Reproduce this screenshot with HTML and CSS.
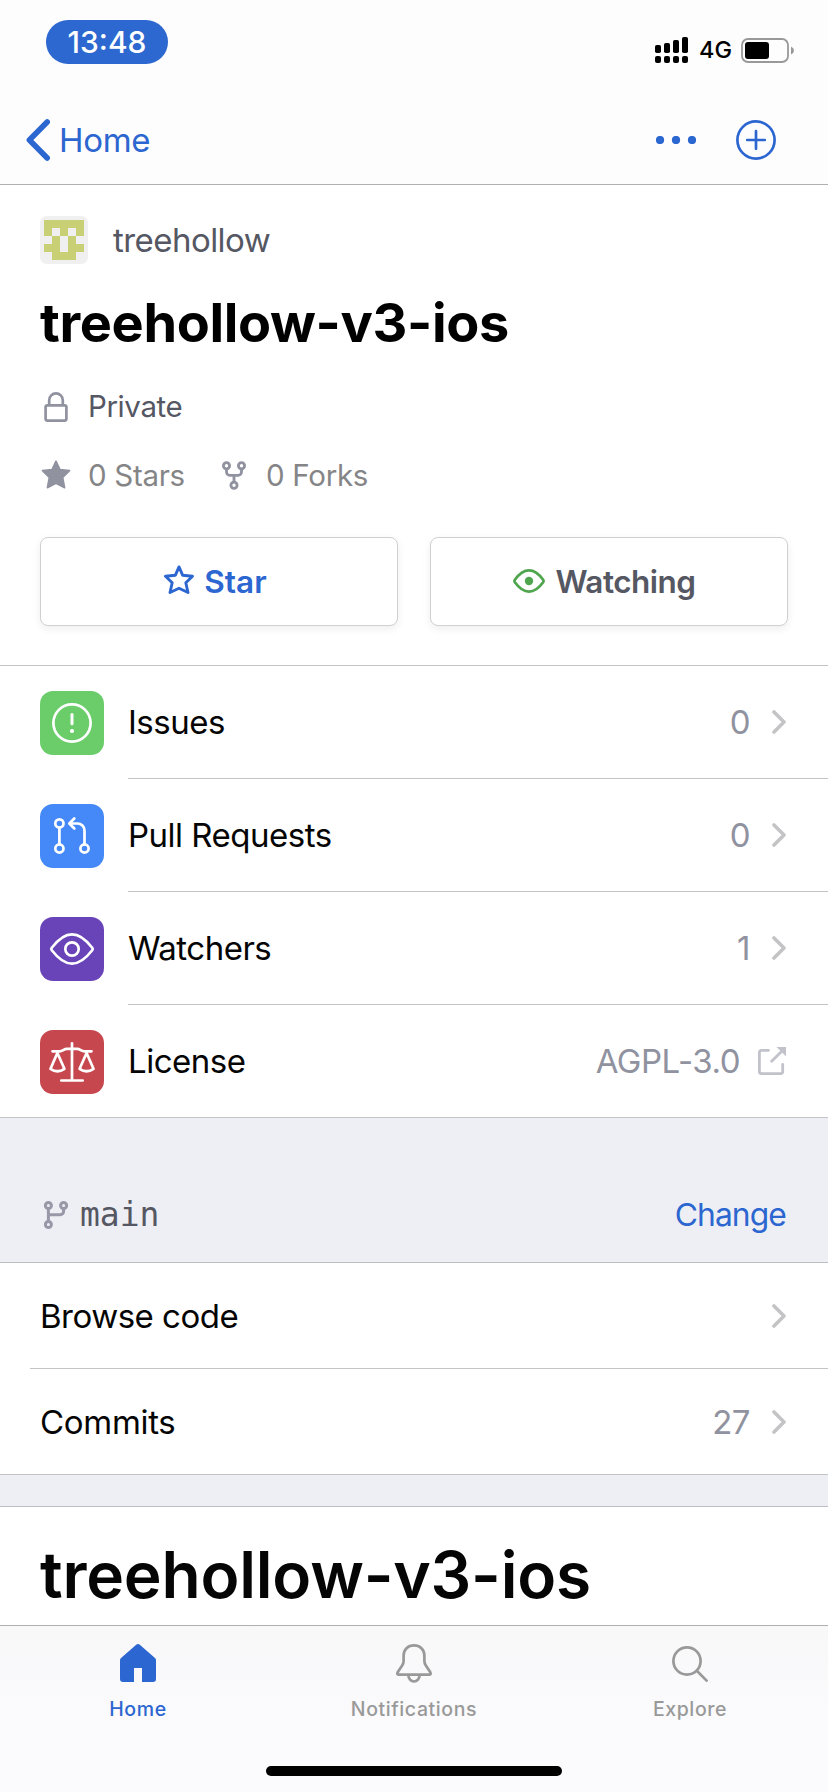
FILE: index.html
```html
<!DOCTYPE html>
<html lang="en">
<head>
<meta charset="utf-8">
<title>treehollow-v3-ios</title>
<link rel="stylesheet" href="styles.css">
</head>
<body>
<svg class="defs" aria-hidden="true">
  <symbol id="chevron" viewBox="0 0 14 24"><path d="M2 2 L12 12 L2 22" fill="none" stroke="currentColor" stroke-width="3.6" stroke-linecap="round" stroke-linejoin="round"/></symbol>
</svg>
<div class="screen">
  <header class="top">
    <div class="status">
      <span class="clock"><span class="clock-text">13:48</span></span>
      <div class="signals">
        <svg width="33" height="26" viewBox="0 0 33 26"><g fill="#000"><rect x="0" y="8" width="6" height="8" rx="1.8"/><rect x="9" y="6" width="6" height="10" rx="1.8"/><rect x="18" y="3" width="6" height="13" rx="1.8"/><rect x="27" y="0" width="6" height="16" rx="1.8"/><rect x="0" y="19" width="6" height="7" rx="2"/><rect x="9" y="19" width="6" height="7" rx="2"/><rect x="18" y="19" width="6" height="7" rx="2"/><rect x="27" y="19" width="6" height="7" rx="2"/></g></svg>
        <span class="network">4G</span>
        <svg width="53" height="25" viewBox="0 0 53 25"><rect x="1" y="1" width="46" height="23" rx="6" fill="none" stroke="#999" stroke-width="1.8"/><rect x="4" y="4" width="24" height="17" rx="3" fill="#000"/><path d="M50 8.5 Q53 10 53 12.5 Q53 15 50 16.5Z" fill="#999"/></svg>
      </div>
    </div>
    <nav class="navbar">
      <a class="back"><svg width="24" height="42" viewBox="0 0 24 42"><path d="M21.2 3 L3.4 21 L21.2 39" fill="none" stroke="currentColor" stroke-width="5.6" stroke-linecap="round" stroke-linejoin="round"/></svg><span class="back-text">Home</span></a>
      <div class="actions">
        <svg width="40" height="8" viewBox="0 0 40 8" fill="currentColor"><circle cx="4" cy="4" r="4.1"/><circle cx="20" cy="4" r="4.1"/><circle cx="36" cy="4" r="4.1"/></svg>
        <svg width="40" height="40" viewBox="0 0 40 40" fill="none" stroke="currentColor" stroke-width="2.7" stroke-linecap="round"><circle cx="20" cy="20" r="18.6"/><path d="M20 11.2V28.8M11.2 20H28.8"/></svg>
      </div>
    </nav>
  </header>

  <section class="repo">
    <div class="owner">
      <svg class="avatar" width="48" height="48" viewBox="0 0 48 48"><rect width="48" height="48" rx="7" fill="#f0f0f0"/><path fill="#c9cf74" shape-rendering="crispEdges" d="M4 4h40v16h-8v8h8v8h-8v8H12v-8H4v-8h8v-8H4z"/><path fill="#f0f0f0" shape-rendering="crispEdges" d="M12 12h8v8h-8zM28 12h8v8h-8zM20 20h8v16h-8z"/></svg>
      <span class="owner-name">treehollow</span>
    </div>
    <h1 class="repo-name">treehollow-v3-ios</h1>
    <div class="meta">
      <svg class="meta-icon" width="30" height="30" viewBox="0 0 30 30" fill="none" stroke="currentColor" stroke-width="2.7"><rect x="4.6" y="13.3" width="20.8" height="15.3" rx="1.8"/><path d="M8.2 13V8.2a6.8 6.8 0 0 1 13.6 0V13"/></svg>
      <span class="private">Private</span>
    </div>
    <div class="meta stats">
      <svg class="meta-icon stat-icon" width="30" height="30" viewBox="0 0 30 30"><path fill="currentColor" stroke="currentColor" stroke-width="1.6" stroke-linejoin="round" d="M15 1.2l4 8.4 9.6 1-6.9 6.8 1.9 10.3-8.6-4.3-8.6 4.3 1.9-10.3L1.4 10.6l9.6-1z"/></svg>
      <span class="stat-stars">0 Stars</span>
      <svg class="fork-icon stat-icon" width="24" height="29" viewBox="0 0 24 29" fill="none" stroke="currentColor" stroke-width="2.8"><circle cx="4.5" cy="4.7" r="3.1"/><circle cx="19.5" cy="4.7" r="3.1"/><circle cx="12" cy="24.3" r="3.1"/><path d="M4.5 8v3a3.3 3.3 0 0 0 3.3 3.3h8.4a3.3 3.3 0 0 0 3.3-3.3V8M12 14.3V21"/></svg>
      <span class="stat-forks">0 Forks</span>
    </div>
    <div class="buttons">
      <button class="btn btn-star"><svg class="star-icon" width="30" height="29" viewBox="0 0 30 29"><path fill="none" stroke="currentColor" stroke-width="2.9" stroke-linejoin="round" d="M15 1.9l3.6 8.3 9.9 1-6.7 6.6 2.2 9.7-9-4.3-9 4.3 2.2-9.7-6.7-6.6 9.9-1z"/></svg><span class="star-text">Star</span></button>
      <button class="btn btn-watch"><svg width="32" height="26" viewBox="0 0 32 26" class="green"><path fill="none" stroke="currentColor" stroke-width="2.8" d="M1.9 14.2Q1.1 13 1.9 11.8C4.8 7.7 9.5 2.4 16 2.4s11.2 5.3 14.1 9.4Q30.9 13 30.1 14.2C27.2 18.3 22.5 23.6 16 23.6S4.8 18.3 1.9 14.2z"/><circle cx="16" cy="13" r="4.2" fill="currentColor"/></svg><span class="watch-text">Watching</span></button>
    </div>
  </section>

  <ul class="list features">
    <li class="row">
      <span class="tile tile-issues"><svg width="64" height="64" viewBox="0 0 64 64"><circle cx="32" cy="32" r="18.6"/><path d="M32 23.5V32.8" stroke-width="3"/><circle class="dot" cx="32" cy="40" r="2.1"/></svg></span>
      <div class="cell"><span class="label">Issues</span><span class="value">0</span><svg class="chev" width="14" height="24"><use href="#chevron"/></svg></div>
    </li>
    <li class="row">
      <span class="tile tile-pulls"><svg width="64" height="64" viewBox="0 0 64 64"><circle cx="19.4" cy="19.4" r="4.1"/><circle cx="19.4" cy="44.5" r="4.1"/><circle cx="44.5" cy="44.5" r="4.1"/><path d="M19.4 23.5V40.4M34.3 14.5L29.3 19.5L34.3 24.5M29.6 19.5H37.5A7 7 0 0 1 44.5 26.5V40.4"/></svg></span>
      <div class="cell"><span class="label">Pull Requests</span><span class="value">0</span><svg class="chev" width="14" height="24"><use href="#chevron"/></svg></div>
    </li>
    <li class="row">
      <span class="tile tile-watchers"><svg width="64" height="64" viewBox="0 0 64 64"><path d="M11.8 33.3Q10.7 32 11.8 30.7C15.8 25.5 22.5 17.3 32 17.3S48.2 25.5 52.2 30.7Q53.3 32 52.2 33.3C48.2 38.5 41.5 46.7 32 46.7S15.8 38.5 11.8 33.3z"/><circle cx="32" cy="32" r="6.7"/></svg></span>
      <div class="cell"><span class="label">Watchers</span><span class="value">1</span><svg class="chev" width="14" height="24"><use href="#chevron"/></svg></div>
    </li>
    <li class="row">
      <span class="tile tile-license"><svg width="64" height="64" viewBox="0 0 64 64"><path d="M32 13.3V50.5M21.3 50.5H42.7M12.5 21.3H19.5C23 21.3 23.5 18.8 27 18.8H37C40.5 18.8 41 21.3 44.5 21.3H51.5"/><path d="M17.4 23L10.5 38.8Q17.4 43.7 24.4 38.8ZM46.6 23L39.6 38.8Q46.6 43.7 53.5 38.8Z"/></svg></span>
      <div class="cell"><span class="label">License</span><span class="value v-license">AGPL-3.0</span><svg class="ext" width="28" height="28" viewBox="0 0 28 28"><path fill="none" stroke="currentColor" stroke-width="2.8" stroke-linecap="round" d="M10.5 3.3H3.4A2 2 0 0 0 1.4 5.3V24.6A2 2 0 0 0 3.4 26.6H22.7A2 2 0 0 0 24.7 24.6V17.5M13.7 14.3L23 5"/><path fill="currentColor" d="M18.5 0H28V9.5z"/></svg></div>
    </li>
  </ul>

  <div class="branch">
    <svg width="24" height="28" viewBox="0 0 24 28" fill="none" stroke="currentColor" stroke-width="3"><circle cx="4.4" cy="4.5" r="3"/><circle cx="19.6" cy="4.5" r="3"/><circle cx="4.4" cy="23.5" r="3"/><path d="M4.4 7.8V20.2M4.4 13.7H16.2A3.4 3.4 0 0 0 19.6 10.3V7.8"/></svg>
    <span class="branch-name">main</span>
    <a class="change">Change</a>
  </div>

  <ul class="list code">
    <li class="code-row"><span class="label">Browse code</span><svg class="chev" width="14" height="24"><use href="#chevron"/></svg></li>
    <li class="code-row"><span class="label commits">Commits</span><span class="value">27</span><svg class="chev" width="14" height="24"><use href="#chevron"/></svg></li>
  </ul>

  <div class="spacer"></div>
  <section class="readme"><h2 class="readme-title">treehollow-v3-ios</h2></section>

  <footer class="tabbar">
    <div class="tabs">
      <a class="tab active"><span class="tab-icon"><svg width="36" height="38" viewBox="0 0 36 38"><path fill="currentColor" d="M16.5 .6Q18-.6 19.5 .6L35 14Q36 15 36 16.3V35Q36 38 33 38H22V24H14V38H3Q0 38 0 35V16.3Q0 15 1 14z"/></svg></span><span class="tab-text">Home</span></a>
      <a class="tab"><span class="tab-icon"><svg width="36" height="39" viewBox="0 0 36 39" fill="none" stroke="currentColor" stroke-width="2.7"><path d="M18 1.4C12 1.4 7.6 5.6 7.6 11.5V17Q7.6 19.3 6.3 21.3L1.7 28.2Q.6 30.7 2.9 30.7H33.1Q35.4 30.7 34.3 28.2L29.7 21.3Q28.4 19.3 28.4 17V11.5C28.4 5.6 24 1.4 18 1.4z"/><path d="M12.4 31A5.6 6.5 0 0 0 23.6 31"/></svg></span><span class="tab-text">Notifications</span></a>
      <a class="tab"><span class="tab-icon tab-search"><svg width="36" height="36" viewBox="0 0 36 36" fill="none" stroke="currentColor" stroke-width="2.7" stroke-linecap="round"><circle cx="15" cy="15" r="13.6"/><path d="M24.8 24.8L34.6 34.6"/></svg></span><span class="tab-text">Explore</span></a>
    </div>
    <div class="indicator"></div>
  </footer>
</div>
</body>
</html>
```
FILE: styles.css
```css
* { box-sizing: border-box; }
body { margin: 0; font-family: Inter, "Liberation Sans", sans-serif; color: #050505; background: #fff; }
svg { display: block; flex: none; }
h1, h2, ul { margin: 0; padding: 0; }
.defs { display: none; }
.screen { width: 828px; height: 1792px; display: flex; flex-direction: column; overflow: hidden; line-height: 1; white-space: nowrap; }

.top { height: 185px; background: #fdfdfd; border-bottom: 1px solid #b0b0b2; }
.status { height: 96px; display: flex; justify-content: space-between; padding: 0 34px 0 46px; }
.clock { width: 122px; height: 44px; margin-top: 20px; border-radius: 22px; background: #2d67d0; color: #fff; font-size: 30px; font-weight: 450; display: flex; align-items: center; justify-content: center; }
.signals { display: flex; align-items: center; height: 100px; }
.network { width: 53px; padding-left: 11px; font-size: 23.5px; font-weight: 500; color: #000; }
.navbar { height: 88px; display: flex; align-items: center; justify-content: space-between; padding: 0 52px 0 26px; color: #2c66d0; }
.back { display: flex; align-items: center; gap: 9px; font-size: 33px; letter-spacing: -.3px; }
.actions { display: flex; align-items: center; gap: 40px; }

.repo { height: 481px; padding: 31px 40px 0; border-bottom: 1px solid #c4c4c6; }
.owner { height: 48px; display: flex; align-items: center; gap: 25px; font-size: 33px; letter-spacing: -.55px; color: #555763; }
.repo-name { margin-top: 29px; height: 60px; line-height: 60px; font-size: 54px; font-weight: 700; letter-spacing: -.35px; color: #000; }
.meta { height: 40px; margin-top: 34px; display: flex; align-items: center; font-size: 29.5px; letter-spacing: -.4px; color: #9092a0; }
.stats { margin-top: 29px; letter-spacing: -.3px; }
.meta-icon { margin: 0 17px 0 1px; }
.stat-icon { margin-bottom: 2px; }
.private { color: #555763; }
.stat-stars, .stat-forks { color: #858587; }
.stat-stars { width: 134px; }
.fork-icon { margin-right: 20px; }
.buttons { display: grid; grid-template-columns: 1fr 1fr; gap: 32px; margin-top: 41px; }
.btn { height: 89px; display: flex; align-items: center; justify-content: center; gap: 10px; padding: 0 7px 1px 0; border: 1px solid #d0d0d2; border-radius: 8px; background: #fff; box-shadow: 0 3px 8px rgba(0, 0, 0, .07); font: 600 31.5px Inter, sans-serif; }
.btn-star { color: #2c66d0; }
.star-icon { margin-bottom: 3px; }
.btn-watch { padding-right: 9px; letter-spacing: -.5px; color: #555763; }
.green { color: #4fa64f; }

.list { list-style: none; background: #fff; font-size: 33px; letter-spacing: -.5px; }
.features { height: 452px; border-bottom: 1px solid #c4c4c6; }
.row { display: flex; align-items: center; height: 113px; padding-left: 40px; }
.tile { width: 64px; height: 64px; border-radius: 13px; flex: none; margin-top: 1px; }
.tile svg { fill: none; stroke: #fff; stroke-width: 2.7; stroke-linecap: round; stroke-linejoin: round; }
.tile .dot { fill: #fff; stroke: none; }
.tile-issues { background: #6acd6a; }
.tile-pulls { background: #4489f7; }
.tile-watchers { background: #6944b8; }
.tile-license { background: #c7474f; }
.cell { flex: 1; height: 100%; margin-left: 24px; padding-right: 42px; display: flex; align-items: center; border-bottom: 1px solid #c4c4c6; }
.row:last-child .cell { border-bottom-color: transparent; }
.label { flex: 1; }
.commits { letter-spacing: -.3px; }
.value { color: #9092a0; margin-right: 22px; }
.v-license { margin-right: 18px; }
.chev { color: #c4c4c6; }
.ext { color: #c2c2cb; }

.branch { height: 145px; padding: 49px 42px 0 44px; display: flex; align-items: center; background: #eeeff4; border-bottom: 1px solid #bdbec4; color: #9898a8; }
.branch-name { flex: 1; margin-left: 12px; font-family: "DejaVu Sans Mono", monospace; font-size: 33px; color: #555763; }
.change { margin-top: 1px; color: #2c66d0; font-size: 31.8px; letter-spacing: -.9px; }

.code-row { height: 106px; padding: 1px 42px 0 10px; margin-left: 30px; display: flex; align-items: center; border-bottom: 1px solid #c4c4c6; }
.code-row:last-child { margin-left: 0; padding-left: 40px; }

.spacer { height: 32px; background: #eeeff4; border-bottom: 1px solid #bdbec4; }
.readme { height: 118px; padding: 38px 40px 0; }
.readme-title { font-size: 64px; line-height: 60px; font-weight: 600; letter-spacing: -.2px; }

.tabbar { height: 167px; border-top: 1px solid #b0b0b2; background: linear-gradient(#f8f8f9, #fbfbfd 60%); display: flex; flex-direction: column; align-items: center; }
.tabs { width: 100%; height: 140px; display: grid; grid-template-columns: repeat(3, 276px); }
.tab { display: flex; flex-direction: column; align-items: center; font-size: 19.5px; font-weight: 500; letter-spacing: .6px; color: #999; }
.active { color: #2c66d0; }
.tab-icon { height: 58px; padding-top: 18px; margin-bottom: 16px; }
.tab-search { padding-top: 20px; }
.indicator { width: 296px; height: 10px; border-radius: 5px; background: #000; }
```
